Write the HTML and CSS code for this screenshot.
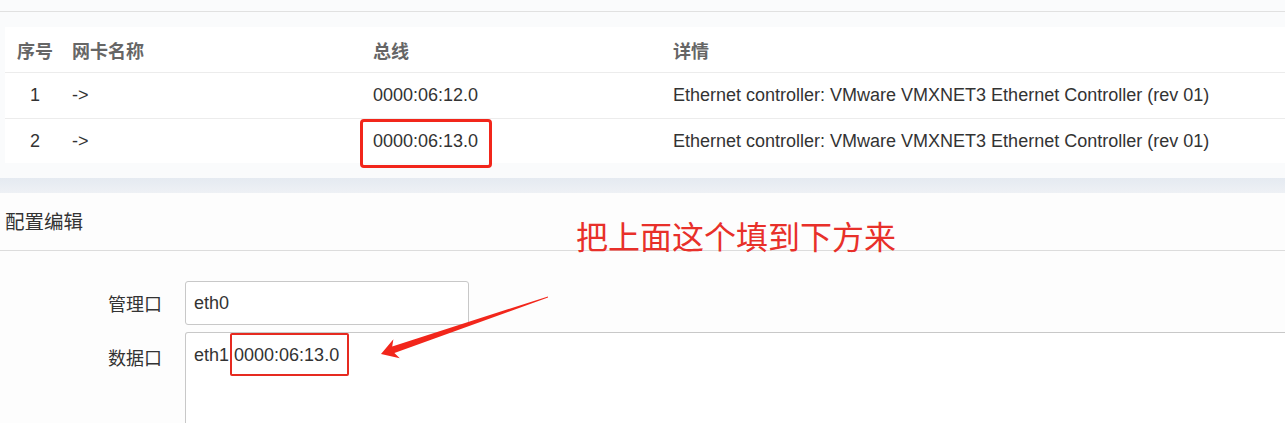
FILE: index.html
```html
<!DOCTYPE html>
<html lang="zh-CN">
<head>
    <meta charset="UTF-8">
    <meta name="viewport" content="width=device-width, initial-scale=1.0">
    <title>网卡配置</title>
    <link rel="stylesheet" href="styles.css">
</head>
<body>
    <div class="topbar"></div>

    <div class="list-wrap">
        <div class="nic-table">
            <div class="row head">
                <div class="cell idx">序号</div>
                <div class="cell">网卡名称</div>
                <div class="cell">总线</div>
                <div class="cell">详情</div>
            </div>
            <div class="row">
                <div class="cell idx">1</div>
                <div class="cell">-&gt;</div>
                <div class="cell">0000:06:12.0</div>
                <div class="cell detail">Ethernet controller: VMware VMXNET3 Ethernet Controller (rev 01)</div>
            </div>
            <div class="row">
                <div class="cell idx">2</div>
                <div class="cell">-&gt;</div>
                <div class="cell bus"><span class="mark-table"></span>0000:06:13.0</div>
                <div class="cell detail">Ethernet controller: VMware VMXNET3 Ethernet Controller (rev 01)</div>
            </div>
        </div>
    </div>

    <div class="sep"></div>

    <div class="panel">
        <div class="panel-title">配置编辑</div>
        <div class="form">
            <div class="form-row">
                <label for="MGMT">管理口</label>
                <div class="input" id="MGMT">eth0</div>
            </div>
            <div class="form-row tall">
                <label for="DATA">数据口</label>
                <div class="textbox" id="DATA">eth1 <span class="hl">0000:06:13.0</span></div>
            </div>
        </div>
    </div>

    <!-- 标注 -->
    <div class="note">把上面这个填到下方来</div>
    <svg class="arrow" viewBox="370 290 190 75" width="190" height="75">
        <polygon fill="#f2261b" points="381,354 393.4,339.2 392.2,346.5 548,296.4 548,297.6 394.4,353.1 399.8,358.2"/>
    </svg>
</body>
</html>
```

FILE: styles.css
```css
body {
    font-family: "Liberation Sans", Arial, "Noto Sans CJK SC", sans-serif;
    margin: 0;
    padding: 0;
    background-color: #fafbfc;
    color: #333;
    font-size: 18px;
    overflow: hidden;
    height: 423px;
    position: relative;
}

.topbar {
    height: 11px;
    border-bottom: 1px solid #e1e1e1;
}

.list-wrap {
    padding: 15px 0 15px 5px;
}

.nic-table {
    background-color: #fff;
}

.row {
    display: grid;
    grid-template-columns: 60px 301px 300px 1fr;
    height: 45px;
    align-items: center;
    border-top: 1px solid #ececec;
}

.row.head {
    height: 45px;
    border-top: none;
    font-weight: bold;
    color: #666;
}

.row:last-child {
    height: 44px;
}

.cell {
    padding-left: 7px;
    white-space: nowrap;
}

.cell.idx {
    padding-left: 0;
    text-align: center;
}

.cell.bus {
    position: relative;
}

.mark-table {
    position: absolute;
    left: -6px;
    top: -12px;
    width: 126px;
    height: 43px;
    border: 3px solid #f2261b;
    border-radius: 4px;
}

.sep {
    height: 15px;
    background: linear-gradient(#e5eaf1, #eef1f5);
}

.panel {
    background-color: #fdfdfd;
}

.panel-title {
    height: 57px;
    line-height: 58px;
    padding-left: 5px;
    font-size: 19.5px;
    color: #333;
    border-bottom: 1px solid #dcdcdc;
}

.form {
    padding-top: 30px;
    display: flex;
    flex-direction: column;
    gap: 7px;
}

.form-row {
    display: flex;
    align-items: center;
}

.form-row label {
    width: 162px;
    text-align: right;
    margin-right: 23px;
    color: #333;
}

.form-row.tall {
    align-items: flex-start;
}

.form-row.tall label {
    padding-top: 12px;
}

.input {
    width: 284px;
    height: 44px;
    box-sizing: border-box;
    border: 1px solid #c8c8c8;
    border-radius: 3px;
    background-color: #fff;
    padding: 0 8px;
    line-height: 42px;
}

.textbox {
    flex: 1;
    margin-right: -4px;
    height: 91px;
    box-sizing: border-box;
    border: 1px solid #c8c8c8;
    border-bottom: none;
    border-radius: 3px 3px 0 0;
    background-color: #fff;
    padding: 11px 8px;
    line-height: 22px;
}

.hl {
    position: relative;
}

.hl::after {
    content: "";
    position: absolute;
    left: -4px;
    top: -12px;
    width: 115px;
    height: 39px;
    border: 2px solid #e62a20;
    border-radius: 2px;
}

.note {
    position: absolute;
    left: 576px;
    top: 219px;
    font-size: 32px;
    line-height: 38px;
    color: #e8302a;
}

.arrow {
    position: absolute;
    left: 370px;
    top: 290px;
}
```
